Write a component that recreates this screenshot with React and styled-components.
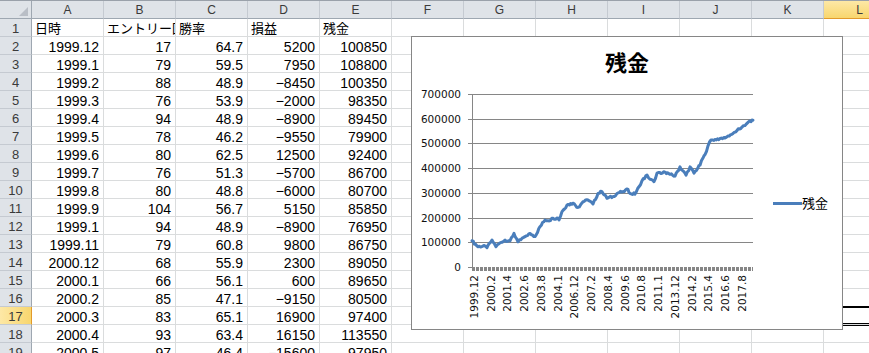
import React from "react";
import styled, { createGlobalStyle } from "styled-components";

const GlobalStyle = createGlobalStyle`
  html, body {
    margin: 0;
    padding: 0;
    background: #fff;
    overflow: hidden;
  }
  body {
    font-family: "Liberation Sans", "Noto Sans CJK JP", sans-serif;
  }
`;

const COLS = ["A", "B", "C", "D", "E", "F", "G", "H", "I", "J", "K", "L"];
const ACTIVE_COL = "L";
const ACTIVE_ROW = 17;

// 日時, エントリー回数, 勝率, 損益, 残金
const DATA = [
  ["1999.12", "17", "64.7", "5200", "100850"],
  ["1999.1", "79", "59.5", "7950", "108800"],
  ["1999.2", "88", "48.9", "−8450", "100350"],
  ["1999.3", "76", "53.9", "−2000", "98350"],
  ["1999.4", "94", "48.9", "−8900", "89450"],
  ["1999.5", "78", "46.2", "−9550", "79900"],
  ["1999.6", "80", "62.5", "12500", "92400"],
  ["1999.7", "76", "51.3", "−5700", "86700"],
  ["1999.8", "80", "48.8", "−6000", "80700"],
  ["1999.9", "104", "56.7", "5150", "85850"],
  ["1999.1", "94", "48.9", "−8900", "76950"],
  ["1999.11", "79", "60.8", "9800", "86750"],
  ["2000.12", "68", "55.9", "2300", "89050"],
  ["2000.1", "66", "56.1", "600", "89650"],
  ["2000.2", "85", "47.1", "−9150", "80500"],
  ["2000.3", "83", "65.1", "16900", "97400"],
  ["2000.4", "93", "63.4", "16150", "113550"],
  ["2000.5", "97", "46.4", "−15600", "97950"],
];
const HEADER = ["日時", "エントリー回数", "勝率", "損益", "残金"];

const X_LABELS = [
  "1999.12", "2000.2", "2001.4", "2002.6", "2003.8", "2004.1", "2006.12",
  "2007.2", "2008.4", "2009.6", "2010.8", "2011.1", "2013.12", "2014.2",
  "2015.4", "2016.6", "2017.8",
];

// plot geometry, page coordinates
const PX0 = 472;
const PX1 = 753;
const PY0 = 267;
const yOf = (v) => PY0 - (v * 173) / 700000;

// rough shape of the balance curve: [x, value in thousands]
const KEY = [
  [472, 106], [478, 82], [483, 85], [487, 78], [492, 109], [496, 82], [500, 98],
  [505, 109], [510, 106], [514, 136], [518, 102], [525, 123], [530, 136],
  [535, 123], [540, 163], [545, 190], [548, 187], [553, 197], [558, 197],
  [559, 190], [562, 224], [567, 251], [573, 258], [578, 241], [583, 264],
  [588, 271], [593, 255], [598, 298], [602, 305], [607, 278], [613, 285],
  [618, 300], [623, 305], [628, 314], [630, 298], [635, 295], [639, 325],
  [642, 349], [647, 372], [650, 355], [654, 345], [657, 380], [661, 378],
  [665, 384], [670, 375], [675, 368], [680, 405], [686, 372], [690, 405],
  [694, 380], [700, 412], [703, 441], [705, 455], [708, 490], [711, 514],
  [715, 516], [720, 520], [725, 522], [728, 530], [733, 540], [737, 552],
  [742, 566], [745, 572], [748, 585], [751, 588], [753, 594],
];

const hash = (i) => {
  const s = Math.sin(i * 12.9898) * 43758.5453;
  return s - Math.floor(s);
};

const buildSeries = () => {
  const pts = [];
  let n = 0;
  for (let k = 0; k < KEY.length - 1; k++) {
    const [x0, v0] = KEY[k];
    const [x1, v1] = KEY[k + 1];
    const steps = Math.max(1, Math.round((x1 - x0) / 1.3));
    for (let s = 0; s < steps; s++) {
      const t = s / steps;
      const jitter = s === 0 ? 0 : (hash(n) - 0.5) * 9;
      pts.push([x0 + (x1 - x0) * t, (v0 + (v1 - v0) * t + jitter) * 1000]);
      n++;
    }
  }
  const last = KEY[KEY.length - 1];
  pts.push([last[0], last[1] * 1000]);
  return pts
    .map(([x, v], i) => `${i ? "L" : "M"}${x.toFixed(1)} ${yOf(v).toFixed(1)}`)
    .join(" ");
};
const SERIES_PATH = buildSeries();

const Page = styled.div`
  position: relative;
  width: 869px;
  height: 353px;
  overflow: hidden;
`;

const Sheet = styled.div`
  display: grid;
  grid-template-columns: 32px repeat(12, 72px);
  grid-auto-rows: 18px;
  border-top: 1px solid #9aa1aa;
  width: 896px;
`;

const Corner = styled.div`
  position: relative;
  box-sizing: border-box;
  background: #dfe3e8;
  border-right: 1px solid #9ea7b1;
  border-bottom: 1px solid #9ea7b1;

  &::after {
    content: "";
    position: absolute;
    right: 3px;
    bottom: 2px;
    border-style: solid;
    border-width: 0 0 9px 9px;
    border-color: transparent transparent #b9bec6 transparent;
  }
`;

const ColHead = styled.div`
  box-sizing: border-box;
  background: ${(p) =>
    p.$active ? "linear-gradient(#fde8a6, #f8d66e)" : "#dfe3e8"};
  border-right: 1px solid #c5cad1;
  border-bottom: 1px solid ${(p) => (p.$active ? "#e29a2b" : "#9ea7b1")};
  color: #3a3a3a;
  font-size: 12px;
  line-height: 19px;
  text-align: center;
`;

const RowHead = styled.div`
  box-sizing: border-box;
  background: ${(p) =>
    p.$active ? "linear-gradient(90deg, #fde8a6, #f8d66e)" : "#dfe3e8"};
  border-right: 1px solid ${(p) => (p.$active ? "#e29a2b" : "#9ea7b1")};
  border-bottom: 1px solid #c5cad1;
  color: #3a3a3a;
  font-size: 13px;
  line-height: 19px;
  text-align: center;
`;

const Cell = styled.div`
  box-sizing: border-box;
  border-right: 1px solid #dadcdd;
  border-bottom: 1px solid #dadcdd;
  padding: 0 4px 0 3px;
  font-size: ${(p) => (p.$label ? "13px" : "14px")};
  line-height: 20px;
  color: #000;
  text-align: ${(p) => (p.$label ? "left" : "right")};
  white-space: nowrap;
  overflow: hidden;
  ${(p) =>
    p.$selected &&
    `
    position: relative;
    z-index: 1;
    box-shadow: 0 0 0 1px #000, inset 0 0 0 1px #000;
  `}
`;

const ChartFrame = styled.div`
  position: absolute;
  left: 411px;
  top: 36px;
  z-index: 2;
  box-sizing: border-box;
  width: 432px;
  height: 294px;
  border: 1px solid #868686;
  background: #fff;
  display: flex;
  flex-direction: column;
`;

const ChartTitle = styled.div`
  height: 48px;
  box-sizing: border-box;
  padding-top: 9px;
  text-align: center;
  font-family: "Noto Sans CJK JP", sans-serif;
  font-weight: 700;
  font-size: 22px;
  line-height: 30px;
  color: #000;
`;

const ChartBody = styled.div`
  flex: 1;
  display: flex;
  align-items: center;
`;

const Plot = styled.svg`
  display: block;
  flex: none;
  align-self: stretch;
`;

const Legend = styled.div`
  display: flex;
  align-items: center;
  margin: 0 0 8px 11px;
  font-family: "Noto Sans CJK JP", sans-serif;
  font-size: 13px;
  line-height: 16px;
  color: #000;
`;

const LegendLine = styled.span`
  display: block;
  width: 29px;
  height: 3px;
  background: #4a7ebb;
`;

const AXIS = "#868686";
const LABEL_FONT = { fontFamily: "DejaVu Sans, sans-serif", fontSize: 10.5 };

const BalanceChart = () => {
  const ticks = [0, 100000, 200000, 300000, 400000, 500000, 600000, 700000];
  return (
    <ChartFrame>
      <ChartTitle>残金</ChartTitle>
      <ChartBody>
        <Plot width="350" height="244" viewBox="412 85 350 244">
          {ticks.map((v) => {
            const y = Math.round(yOf(v)) + 0.5;
            return (
              <g key={v}>
                {v > 0 && (
                  <line x1={PX0} x2={PX1} y1={y} y2={y} stroke={AXIS} strokeWidth="1" />
                )}
                <line x1={468} x2={PX0} y1={y} y2={y} stroke={AXIS} strokeWidth="1" />
                <text
                  x="461"
                  y={y + 3.5}
                  textAnchor="end"
                  fill="#111"
                  style={LABEL_FONT}
                >
                  {v}
                </text>
              </g>
            );
          })}
          <line
            x1={PX0 + 0.5}
            x2={PX0 + 0.5}
            y1={Math.round(yOf(700000))}
            y2={PY0 + 1}
            stroke={AXIS}
            strokeWidth="1"
          />
          <line
            x1={PX0}
            x2={PX1}
            y1={PY0 + 2}
            y2={PY0 + 2}
            stroke={AXIS}
            strokeWidth="4"
            strokeDasharray="3 1"
          />
          {X_LABELS.map((label, i) => {
            const x = 474 + i * 16.75 + 3.8;
            return (
              <text
                key={label + i}
                x={x}
                y="275"
                textAnchor="end"
                transform={`rotate(-90 ${x} 275)`}
                fill="#111"
                style={LABEL_FONT}
              >
                {label}
              </text>
            );
          })}
          <path
            d={SERIES_PATH}
            fill="none"
            stroke="#4a7ebb"
            strokeWidth="3"
            strokeLinejoin="round"
            strokeLinecap="round"
          />
        </Plot>
        <Legend>
          <LegendLine />
          残金
        </Legend>
      </ChartBody>
    </ChartFrame>
  );
};

const rowCells = (r) => {
  if (r === 1) return HEADER;
  return DATA[r - 2] || [];
};

export default function App() {
  const rows = Array.from({ length: 19 }, (_, i) => i + 1);
  return (
    <Page>
      <GlobalStyle />
      <Sheet>
        <Corner />
        {COLS.map((c) => (
          <ColHead key={c} $active={c === ACTIVE_COL}>
            {c}
          </ColHead>
        ))}
        {rows.map((r) => {
          const values = rowCells(r);
          return (
            <React.Fragment key={r}>
              <RowHead $active={r === ACTIVE_ROW}>{r}</RowHead>
              {COLS.map((c, ci) => (
                <Cell
                  key={c}
                  $label={r === 1}
                  $selected={r === ACTIVE_ROW && c === ACTIVE_COL}
                >
                  {values[ci] || ""}
                </Cell>
              ))}
            </React.Fragment>
          );
        })}
      </Sheet>
      <BalanceChart />
    </Page>
  );
}
